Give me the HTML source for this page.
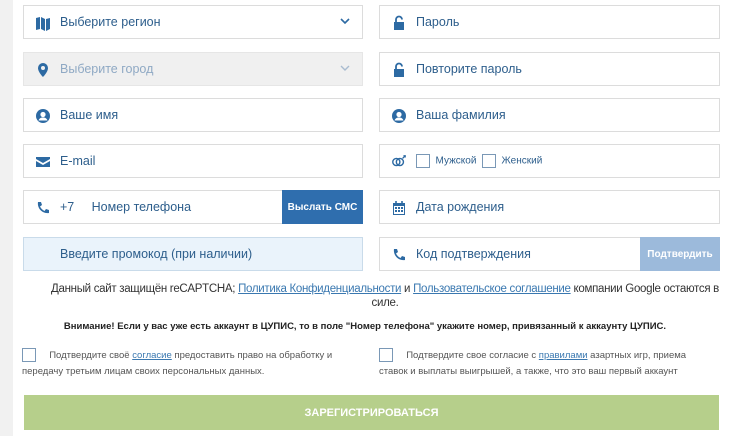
<!DOCTYPE html>
<html><head><meta charset="utf-8"><style>
*{box-sizing:border-box;margin:0;padding:0}
body{width:730px;height:436px;background:#fff;font-family:"Liberation Sans",sans-serif;color:#2d5e8c;position:relative;overflow:hidden}
.strip{position:absolute;left:0;top:0;width:13px;height:436px;background:#f1f1f1}
.f{position:absolute;height:34px;border:1px solid #dcdcdc;background:#fff;font-size:12.5px;display:flex;align-items:center}
.f .ic{position:absolute;left:11px;top:9px;width:16px;height:16px}
.f span.t{position:absolute;left:36px}
.L{left:23px;width:340px}.R{left:379px;width:341px}
.btn{position:absolute;right:-1px;top:-1px;height:34px;color:#fff;font-size:10px;font-weight:bold;display:flex;align-items:center;justify-content:center}
.chev{position:absolute;right:12px;top:11px}
.cb{display:inline-block;width:13px;height:13px;border:1px solid #7a98b6;background:#fff;vertical-align:middle}
.p{position:absolute;font-size:12px;color:#333;text-align:center;width:730px;left:0}
a{color:#3a78b0;text-decoration:underline}
</style></head><body>
<div class="strip"></div>

<div class="f L" style="top:5px"><svg class="ic" viewBox="0 0 16 16"><path d="M1 3l4-1v12l-4 1zM6 2l4 2v12l-4-2zM11 4l4-1v11l-4 2z" fill="#2d6aa3"/></svg><span class="t">Выберите регион</span><svg class="chev" width="10" height="8" viewBox="0 0 10 8"><path d="M1 2l4 4 4-4" stroke="#2d6aa3" stroke-width="1.6" fill="none"/></svg></div>
<div class="f L" style="top:52px;background:#f0f0f0;border-color:#e6e6e6;color:#8fa9c4"><svg class="ic" viewBox="0 0 16 16"><path d="M8 1a5 5 0 0 0-5 5c0 4 5 9 5 9s5-5 5-9a5 5 0 0 0-5-5zm0 3a2 2 0 1 1 0 4 2 2 0 0 1 0-4z" fill="#2d6aa3"/></svg><span class="t">Выберите город</span><svg class="chev" width="10" height="8" viewBox="0 0 10 8"><path d="M1 2l4 4 4-4" stroke="#a9bcd0" stroke-width="1.4" fill="none"/></svg></div>
<div class="f L" style="top:98px"><svg class="ic" viewBox="0 0 16 16"><circle cx="8" cy="8" r="7" fill="#2d6aa3"/><circle cx="8" cy="6.5" r="2.6" fill="#fff"/><path d="M3.5 12.5c1-2.5 2.5-3 4.5-3s3.5.5 4.5 3" fill="#fff"/></svg><span class="t">Ваше имя</span></div>
<div class="f L" style="top:144px"><svg class="ic" viewBox="0 0 16 16"><path d="M1 3h14v2l-7 4-7-4zM1 7l7 4 7-4v6H1z" fill="#2d6aa3"/></svg><span class="t">E-mail</span></div>
<div class="f L" style="top:190px"><svg class="ic" viewBox="0 0 16 16"><path d="M3 2l3 0 1 3-2 1.5c1 2 2.5 3.5 4.5 4.5L11 9l3 1v3c-7 1-12-5-11-11z" fill="#2d6aa3"/></svg><span class="t">+7&nbsp;&nbsp;&nbsp;&nbsp; Номер телефона</span><div class="btn" style="width:81px;background:#2f6eae">Выслать СМС</div></div>
<div class="f L" style="top:237px;background:#eaf3fb;border-color:#c9dbea"><span class="t">Введите промокод (при наличии)</span></div>

<div class="f R" style="top:5px"><svg class="ic" viewBox="0 0 16 16"><path d="M3 7h10v8H3z" fill="#2d6aa3"/><path d="M5 7V4.5a3 3 0 0 1 6 0" stroke="#2d6aa3" stroke-width="1.8" fill="none"/></svg><span class="t">Пароль</span></div>
<div class="f R" style="top:52px"><svg class="ic" viewBox="0 0 16 16"><path d="M3 7h10v8H3z" fill="#2d6aa3"/><path d="M5 7V4.5a3 3 0 0 1 6 0" stroke="#2d6aa3" stroke-width="1.8" fill="none"/></svg><span class="t">Повторите пароль</span></div>
<div class="f R" style="top:98px"><svg class="ic" viewBox="0 0 16 16"><circle cx="8" cy="8" r="7" fill="#2d6aa3"/><circle cx="8" cy="6.5" r="2.6" fill="#fff"/><path d="M3.5 12.5c1-2.5 2.5-3 4.5-3s3.5.5 4.5 3" fill="#fff"/></svg><span class="t">Ваша фамилия</span></div>
<div class="f R" style="top:144px;font-size:10px"><svg class="ic" viewBox="0 0 18 16"><circle cx="6" cy="8" r="4" stroke="#2d6aa3" stroke-width="1.6" fill="none"/><circle cx="10" cy="8" r="4" stroke="#2d6aa3" stroke-width="1.6" fill="none"/><path d="M13 4l3-3M14 1h2v2" stroke="#2d6aa3" stroke-width="1.4" fill="none"/></svg><span class="t" style="left:36px"><span class="cb" style="width:14px;height:14px"></span>&nbsp; Мужской&nbsp; <span class="cb" style="width:14px;height:14px"></span>&nbsp; Женский</span></div>
<div class="f R" style="top:190px"><svg class="ic" viewBox="0 0 16 16"><path d="M2 3h12v12H2z" fill="#2d6aa3"/><path d="M3 6h10v8H3z" fill="#fff"/><path d="M4 7h2v2H4zM7 7h2v2H7zM10 7h2v2h-2zM4 10h2v2H4zM7 10h2v2H7zM10 10h2v2h-2z" fill="#2d6aa3"/><path d="M5 1v3M11 1v3" stroke="#2d6aa3" stroke-width="1.6"/></svg><span class="t">Дата рождения</span></div>
<div class="f R" style="top:237px"><svg class="ic" viewBox="0 0 16 16"><path d="M3 2l3 0 1 3-2 1.5c1 2 2.5 3.5 4.5 4.5L11 9l3 1v3c-7 1-12-5-11-11z" fill="#2d6aa3"/></svg><span class="t">Код подтверждения</span><div class="btn" style="width:80px;background:#9cbadb">Подтвердить</div></div>

<div class="p" style="top:282px;left:45px;width:680px;line-height:14px;font-size:11.5px;letter-spacing:-0.3px">Данный сайт защищён reCAPTCHA; <a>Политика Конфиденциальности</a> и <a>Пользовательское соглашение</a> компании Google остаются в силе.</div>
<div class="p" style="top:321px;font-size:9.5px;font-weight:bold;color:#222">Внимание! Если у вас уже есть аккаунт в ЦУПИС, то в поле "Номер телефона" укажите номер, привязанный к аккаунту ЦУПИС.</div>
<div style="position:absolute;left:22px;top:348px;width:330px;font-size:9.5px;color:#555;line-height:16px"><span class="cb" style="width:14px;height:14px"></span>&nbsp;&nbsp;&nbsp;&nbsp; Подтвердите своё <a>согласие</a> предоставить право на обработку и<br>передачу третьим лицам своих персональных данных.</div>
<div style="position:absolute;left:379px;top:348px;width:345px;font-size:9.5px;color:#555;line-height:16px"><span class="cb" style="width:14px;height:14px"></span>&nbsp;&nbsp;&nbsp;&nbsp; Подтвердите свое согласие с <a>правилами</a> азартных игр, приема<br>ставок и выплаты выигрышей, а также, что это ваш первый аккаунт</div>
<div style="position:absolute;left:24px;top:395px;width:695px;height:35px;background:#b6cf8b;color:#fff;font-size:11px;font-weight:bold;display:flex;align-items:center;justify-content:center">ЗАРЕГИСТРИРОВАТЬСЯ</div>
</body></html>
